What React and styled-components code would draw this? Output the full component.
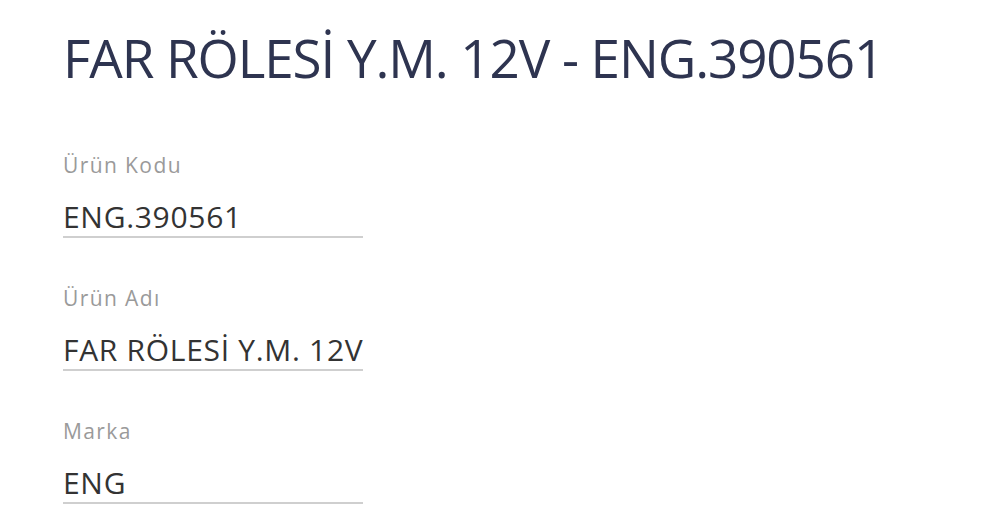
import React from "react";
import styled, { createGlobalStyle } from "styled-components";

const Global = createGlobalStyle`
  html, body { margin: 0; padding: 0; background: #fff; }
  body { font-family: "Open Sans", "Noto Sans", sans-serif; }
`;

const Page = styled.div`
  padding: 26px 0 0 63px;
  width: 1000px;
  height: 529px;
  box-sizing: border-box;
  overflow: hidden;
`;

const Title = styled.h1`
  margin: 0 0 63px 0;
  font-size: 53px;
  font-weight: 400;
  line-height: 64px;
  color: #2e3450;
  letter-spacing: -1.1px;
  white-space: nowrap;
`;

const Fields = styled.div`
  display: flex;
  flex-direction: column;
  gap: 48px;
`;

const Field = styled.div`
  width: 300px;
`;

const Label = styled.div`
  font-size: 21px;
  line-height: 24px;
  color: #9a9a9a;
  letter-spacing: 1.4px;
  margin-bottom: 22px;
`;

const Value = styled.div`
  font-size: 30px;
  line-height: 36px;
  color: #333;
  letter-spacing: 0.7px;
  white-space: nowrap;
  border-bottom: 2px solid #cfcfcf;
  padding-bottom: 1px;
`;

const data = [
  { label: "Ürün Kodu", value: "ENG.390561" },
  { label: "Ürün Adı", value: "FAR RÖLESİ Y.M. 12V" },
  { label: "Marka", value: "ENG" },
];

export default function App() {
  return (
    <>
      <Global />
      <Page>
        <Title>FAR RÖLESİ Y.M. 12V - ENG.390561</Title>
        <Fields>
          {data.map((d) => (
            <Field key={d.label}>
              <Label>{d.label}</Label>
              <Value>{d.value}</Value>
            </Field>
          ))}
        </Fields>
      </Page>
    </>
  );
}
